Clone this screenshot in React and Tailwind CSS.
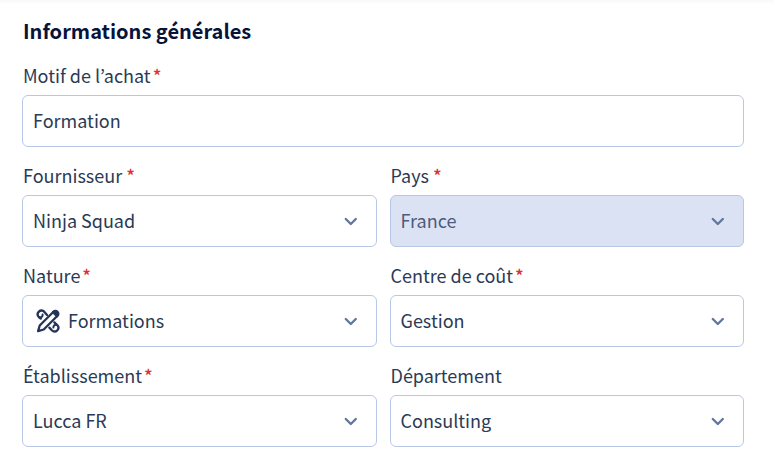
import { clsx } from 'clsx';

const Label = ({ htmlFor, required, spaced, children }) => (
  <label htmlFor={htmlFor} className="block pl-px text-lg leading-[26px] mb-[7px] text-[#2b3a55]">
    {children}
    {required && <span className={clsx('font-medium text-[#e0302d]', spaced ? 'ml-1' : 'ml-0.5')}>*</span>}
  </label>
);

const Chevron = () => (
  <svg viewBox="0 0 14 9" className="absolute right-[19px] top-[22px] w-3.5 h-[9px] pointer-events-none" fill="none" stroke="#62779d" strokeWidth="2.4" strokeLinecap="round" strokeLinejoin="round" aria-hidden="true">
    <path d="M1.8 2 6.8 7l5-5" />
  </svg>
);

const TrainingIcon = () => (
  <svg viewBox="0 0 24 24" className="absolute left-3.5 top-3.5 w-6 h-6 pointer-events-none" fill="none" stroke="#25345a" strokeWidth="2.3" strokeLinecap="round" strokeLinejoin="round" aria-hidden="true">
    <path d="M11 6 8.4 2.9C6.8 1.2 4.6 1 2.9 2.6 1.2 4.3 1.2 6.3 2.8 8l2 1.6" />
    <path d="M3.6 8.4c1.9.2 3.2-1 3-2.8" strokeWidth="2" />
    <path d="M13.4 18.6l2.4 2.6c1.7 1.7 3.8 1.7 5.5.1 1.6-1.7 1.5-3.7-.1-5.3L18.4 13.4" />
    <path d="M20.4 15.8c-1.9-.2-3.2 1-3 2.8" strokeWidth="2" />
    <path d="M17 3.2 3.7 16.5 2.1 22.1l5.6-1.6L21 7.2" />
    <path d="M17 3.2a2.9 2.9 0 1 1 4 4z" fill="#25345a" />
  </svg>
);

const SelectField = ({ id, label, value, required, spaced, disabled, icon: Icon }) => (
  <div>
    <Label htmlFor={id} required={required} spaced={spaced}>{label}</Label>
    <div className="relative">
      <select
        id={id}
        defaultValue={value}
        disabled={disabled}
        className={clsx(
          'block w-full h-[52px] appearance-none rounded-md border border-[#b8c7e7] pr-12 pb-0.5 text-lg opacity-100',
          Icon ? 'pl-[45px]' : 'pl-2.5',
          disabled ? 'bg-[#dbe2f4] text-[#4b5c7c]' : 'bg-white text-[#2b3a55]',
        )}
      >
        <option>{value}</option>
      </select>
      {Icon && <Icon />}
      <Chevron />
    </div>
  </div>
);

const fields = [
  { id: 'fournisseur', label: 'Fournisseur', value: 'Ninja Squad', required: true, spaced: true },
  { id: 'pays', label: 'Pays', value: 'France', required: true, spaced: true, disabled: true },
  { id: 'nature', label: 'Nature', value: 'Formations', required: true, icon: TrainingIcon },
  { id: 'centre', label: 'Centre de coût', value: 'Gestion', required: true },
  { id: 'etablissement', label: 'Établissement', value: 'Lucca FR', required: true },
  { id: 'departement', label: 'Département', value: 'Consulting' },
];

const App = () => (
  <main className="min-h-screen bg-white bg-linear-to-b from-[#f8f8f8] to-white to-[4px] pl-[22px] pr-[30px] pt-4 pb-4 font-['Noto_Sans_CJK_KR','Noto_Sans',sans-serif]">
    <form>
      <h2 className="pl-px text-xl leading-[30px] font-bold text-[#07133a] mb-4">Informations générales</h2>
      <div className="grid grid-cols-2 gap-x-[13px] gap-y-[15px]">
        <div className="col-span-2">
          <Label htmlFor="motif" required>Motif de l’achat</Label>
          <input
            id="motif"
            type="text"
            defaultValue="Formation"
            className="block w-full h-[52px] rounded-md border border-[#b8c7e7] bg-white px-2.5 pb-0.5 text-lg text-[#2b3a55]"
          />
        </div>
        {fields.map((field) => <SelectField key={field.id} {...field} />)}
      </div>
    </form>
  </main>
);

export default App;
